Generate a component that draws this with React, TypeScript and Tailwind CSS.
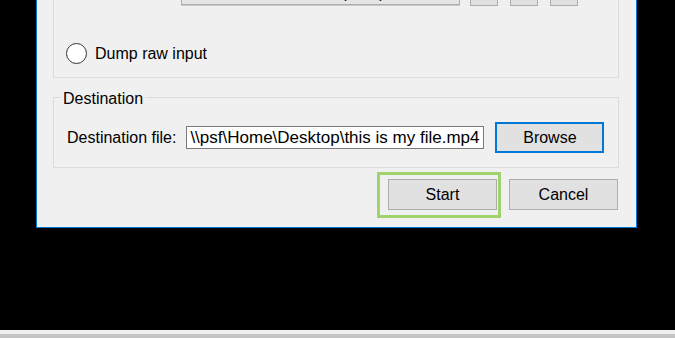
import React from 'react'

const FONT = { fontFamily: '"Liberation Sans", Arial, sans-serif' }

function WinButton({ label, focused = false, className = '' }: { label: string; focused?: boolean; className?: string }) {
  return (
    <div
      className={
        'flex h-[31px] w-[109px] items-center justify-center bg-[#e1e1e1] text-[16px] leading-[16px] text-black ' +
        (focused ? 'border-2 border-[#0078d7] ' : 'border border-[#adadad] ') +
        className
      }
    >
      {label}
    </div>
  )
}

export default function App() {
  return (
    <div className="flex h-[338px] w-[675px] flex-col overflow-hidden bg-black" style={FONT}>
      {/* Convert dialog, top part scrolled out of view */}
      <div className="ml-[36px] mt-[-30px] w-[601px] border-x border-b border-[#0078d7] bg-[#f0f0f0] pb-[9px] text-[16px] leading-[16px] text-black">
        {/* Settings group (cut off) */}
        <div className="ml-[16px] w-[566px] border-x border-b border-[#dcdcdc] pb-[13px] pt-[11px]">
          <div className="flex h-[25px] items-start">
            <div className="ml-[127px] flex h-[24px] w-[279px] items-center border border-[#adadad] bg-[#e5e5e5] pl-[6px] shadow-[0_1px_0_#c8c8c8]">
              <span className="whitespace-nowrap">Video - H.264 + MP3 (MP4)</span>
            </div>
            <div className="relative ml-[10px] h-[25px] w-[28px] border border-[#adadad] bg-[#e1e1e1]">
              <span className="absolute bottom-[17px] left-[6px] h-[4px] w-[3px] bg-[#1c5fb0]" />
              <span className="absolute bottom-[17px] left-[12px] h-[3px] w-[2px] bg-[#8a8a8a]" />
            </div>
            <div className="ml-[12px] h-[25px] w-[28px] border border-[#adadad] bg-[#e1e1e1]" />
            <div className="ml-[12px] h-[25px] w-[28px] border border-[#adadad] bg-[#e1e1e1]" />
          </div>
          <div className="ml-[12px] mt-[37px] flex h-[21px] items-center">
            <div className="h-[21px] w-[21px] rounded-full border-[1.5px] border-[#333333] bg-white" />
            <span className="ml-[8px]">Dump raw input</span>
          </div>
        </div>

        {/* Destination group */}
        <fieldset className="ml-[16px] mt-[9px] w-[566px] border border-[#dcdcdc] pb-[14px] pl-[7px]">
          <legend className="px-[2px] pt-[4px] leading-[16px]">Destination</legend>
          <div className="mt-[15px] flex h-[31px] items-center">
            <span className="ml-[6px] whitespace-nowrap">Destination file:</span>
            <div className="ml-[10px] flex h-[23px] w-[298px] items-center overflow-hidden whitespace-nowrap border border-[#7a7a7a] bg-white pl-[3px] text-[17px]">
              \\psf\Home\Desktop\this is my file.mp4
            </div>
            <WinButton label="Browse" focused className="ml-[11px]" />
          </div>
        </fieldset>

        {/* Action buttons */}
        <div className="mr-[18px] mt-[4px] flex items-start justify-end">
          <div className="border-[3px] border-[#9fd36b] pb-[5px] pl-[8px] pr-[1px] pt-[4px]">
            <WinButton label="Start" />
          </div>
          <WinButton label="Cancel" className="ml-[8px] mt-[7px]" />
        </div>
      </div>

      <div className="flex-1" />
      <div className="h-[4px] bg-[#f0f0f0]" />
      <div className="h-[4px] bg-[#c4c4c4]" />
    </div>
  )
}
